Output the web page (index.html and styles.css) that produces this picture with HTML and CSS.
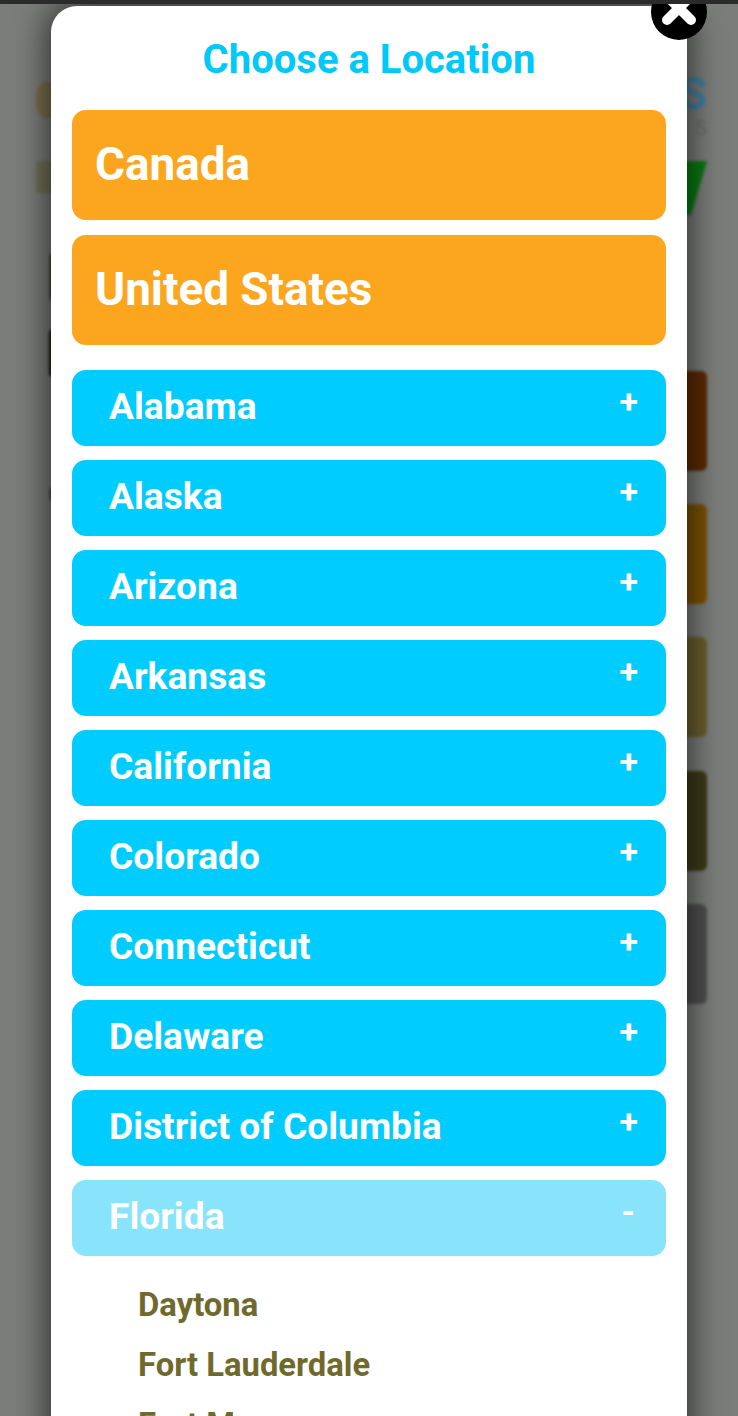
FILE: index.html
```html
<!DOCTYPE html>
<html lang="en">
<head>
<meta charset="utf-8">
<title>Choose a Location</title>
<link rel="stylesheet" href="styles.css">
</head>
<body>
<div class="topbar"></div>
<main class="page">
  <header class="page-head">
    <div class="logo-mark"></div>
    <div class="brand"><span class="brand-name">S</span><span class="brand-sub">S</span></div>
  </header>
  <div class="banner"><div class="banner-olive"></div><div class="banner-green"></div></div>
  <div class="hero">
    <div class="hero-left"><div class="hero-a"></div><div class="hero-b"></div><div class="hero-c"></div></div>
    <div class="tiles">
      <div class="tile tile-brown"></div>
      <div class="tile tile-amber"></div>
      <div class="tile tile-khaki"></div>
      <div class="tile tile-olive"></div>
      <div class="tile tile-grey"></div>
    </div>
  </div>
</main>
<section class="modal">
  <h1 class="modal-title">Choose a Location</h1>
  <div class="country">Canada</div>
  <div class="country">United States</div>
  <ul class="states">
    <li class="state"><span>Alabama</span><span class="sign">+</span></li>
    <li class="state"><span>Alaska</span><span class="sign">+</span></li>
    <li class="state"><span>Arizona</span><span class="sign">+</span></li>
    <li class="state"><span>Arkansas</span><span class="sign">+</span></li>
    <li class="state"><span>California</span><span class="sign">+</span></li>
    <li class="state"><span>Colorado</span><span class="sign">+</span></li>
    <li class="state"><span>Connecticut</span><span class="sign">+</span></li>
    <li class="state"><span>Delaware</span><span class="sign">+</span></li>
    <li class="state"><span>District of Columbia</span><span class="sign">+</span></li>
    <li class="state state-open"><span>Florida</span><span class="sign sign-minus">-</span></li>
  </ul>
  <ul class="cities">
    <li>Daytona</li>
    <li>Fort Lauderdale</li>
    <li>Fort Myers</li>
  </ul>
  <button class="close" aria-label="Close">
    <svg viewBox="0 0 56 56" width="56" height="56"><path d="M16 12 L40 36 M40 12 L16 36" fill="none" stroke="#fff" stroke-width="10" stroke-linecap="round"/></svg>
  </button>
</section>
</body>
</html>
```
FILE: styles.css
```css
* { box-sizing: border-box; }
html, body { margin: 0; height: 1416px; overflow: hidden; }
body { position: relative; background: #7b7d7b; font-family: Roboto, "Liberation Sans", sans-serif; }
ul { list-style: none; margin: 0; padding: 0; }

.topbar { position: absolute; z-index: 3; left: 0; top: 0; width: 100%; height: 4px; background: #2b2b2b; }

.page { padding: 0 31px 0 36px; filter: blur(1.5px); }
.page-head { display: flex; justify-content: space-between; height: 150px; padding-top: 72px; }
.logo-mark { width: 24px; height: 36px; margin-top: 10px; border-radius: 12px; background: #7a6f4c; }
.brand { display: flex; flex-direction: column; align-items: flex-end; line-height: 1; }
.brand-name { font-size: 44px; font-weight: 700; color: #3f7fa5; }
.brand-sub { margin-top: 2px; font-size: 20px; color: #696b69; }
.banner { display: flex; justify-content: space-between; height: 86px; padding-top: 11px; }
.banner-olive { width: 24px; height: 32px; background: #6f7056; }
.banner-green { width: 40px; height: 54px; background: #0a7a12; clip-path: polygon(0 0, 100% 0, 60% 100%, 0 100%); }
.hero { display: flex; justify-content: space-between; }
.hero-left { display: flex; flex-direction: column; align-items: flex-start; padding: 18px 0 0 14px; }
.hero-a { width: 3px; height: 46px; border-radius: 2px; background: #2a2018; }
.hero-b { width: 5px; height: 46px; margin-top: 30px; margin-left: -1px; border-radius: 3px; background: #1c1410; }
.hero-c { width: 3px; height: 12px; margin-top: 112px; background: #4a2a30; }
.tiles { display: flex; flex-direction: column; gap: 33.2px; padding-top: 135px; }
.tile { width: 100px; height: 100px; border-radius: 6px; }
.tile-brown { background: #5a2a04; }
.tile-amber { background: #7a5203; }
.tile-khaki { background: #6a5e2e; }
.tile-olive { background: #3c3a18; }
.tile-grey { background: #505050; }

.modal { position: absolute; z-index: 2; left: 51px; top: 6px; width: 636px; height: 1500px; padding: 0 21px; background: #fff; border-radius: 26px 26px 0 0; box-shadow: 0 0 32px 4px rgba(0, 0, 0, .62); }
.modal-title { margin: 0; height: 104px; padding-top: 31px; font-size: 40px; line-height: 46px; font-weight: 700; color: #00c8f8; text-align: center; }
.country { height: 110px; margin-bottom: 15px; padding-left: 23px; border-radius: 14px; background: #fba61e; color: #fff; font-size: 45.8px; font-weight: 700; line-height: 109px; }
.states { margin-top: 25px; display: flex; flex-direction: column; gap: 14.45px; }
.state { display: flex; justify-content: space-between; height: 75.6px; padding: 0 28px 0 37px; border-radius: 14px; background: #00ccff; color: #fff; font-size: 37.2px; font-weight: 700; line-height: 73px; }
.state-open { background: #87e4fa; }
.sign { line-height: 62px; font-size: 34px; font-weight: 700; }
.sign-minus { padding-right: 3px; }
.cities { padding: 19.5px 0 0 66px; color: #6f6a2c; font-size: 32.8px; font-weight: 700; line-height: 60px; }

.close { position: absolute; right: -20px; top: -22px; width: 56px; height: 56px; padding: 0; border: 0; border-radius: 50%; background: #000; }
.close svg { display: block; }
```
